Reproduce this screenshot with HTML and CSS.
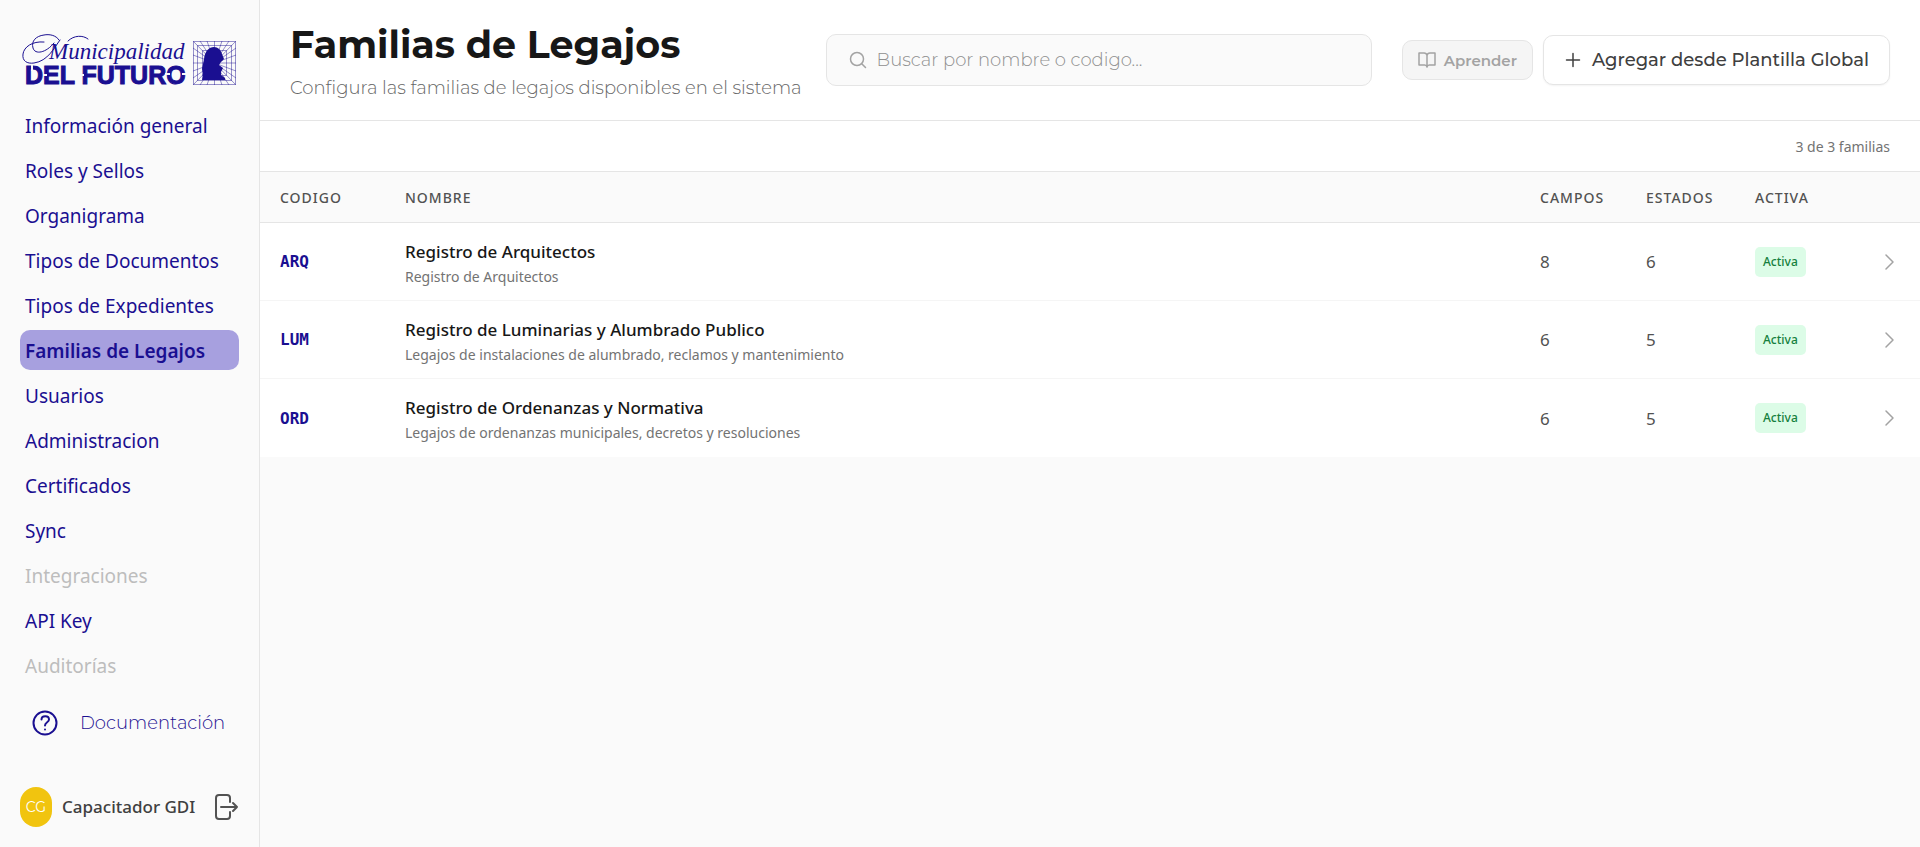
FILE: index.html
```html
<!DOCTYPE html>
<html lang="es">
<head>
  <meta charset="UTF-8">
  <meta name="viewport" content="width=device-width, initial-scale=1.0">
  <title>Familias de Legajos</title>
  <link rel="stylesheet" href="styles.css">
</head>
<body>
  <div class="layout">

    <aside class="sidebar">
      <a class="logo" href="#" aria-label="Municipalidad del Futuro">
        <svg width="214" height="56" viewBox="0 0 214 56">
          <g fill="none" stroke="#1a0f91" stroke-width="1" stroke-linecap="round">
            <path d="M37 8C34 3 27 2 22 3C14 4 9 9 11 16C13 23 24 21 32 11"/>
            <path d="M22 10C10 9 2 15 1 22C0 29 5 32 12 31C26 29 32 16 38 8"/>
            <path d="M46 9C52 3 61 3 66 7"/>
          </g>
          <text class="logo-script" x="27" y="27">Municipalidad</text>
          <text class="logo-block" x="3" y="52">DEL FUTURO</text>
          <!-- stencil cuts -->
          <path fill="#fafafa" d="M9 33h2v6h-2zM21 42h4v2h-4zM58 42h4v2h-4zM143 41h5v2h-5zM160 41h5v2h-5z"/>
          <g fill="none" stroke="#1a0f91" stroke-width="1" stroke-opacity="0.45">
            <path d="M171.500 9.500h42v43h-42zM175.500 13.500h34v35h-34zM180.500 18.500h24v25h-24z"/>
            <path d="M171 9l43 44M214 9l-43 44M178 9l29 44M207 9l-29 44M185 9l15 44M200 9l-15 44M171 16l43 30M214 16l-43 30M171 23l43 16M214 23l-43 16M192.500 9v44M171 31h43"/>
          </g>
          <path fill="#1a0f91" d="M180 48L181 41L180 37L182 27C183 19 187 15 192 15C196 15 199 18 200 22L202 27L199 30L197 33L201 36L199 40L199 43L203 46V48Z"/>
        </svg>
      </a>

      <nav class="menu">
        <a class="menu-item" href="#">Información general</a>
        <a class="menu-item" href="#">Roles y Sellos</a>
        <a class="menu-item" href="#">Organigrama</a>
        <a class="menu-item" href="#">Tipos de Documentos</a>
        <a class="menu-item" href="#">Tipos de Expedientes</a>
        <a class="menu-item active" href="#" aria-current="page">Familias de Legajos</a>
        <a class="menu-item" href="#">Usuarios</a>
        <a class="menu-item" href="#">Administracion</a>
        <a class="menu-item" href="#">Certificados</a>
        <a class="menu-item" href="#">Sync</a>
        <a class="menu-item disabled" href="#" aria-disabled="true">Integraciones</a>
        <a class="menu-item" href="#">API Key</a>
        <a class="menu-item disabled" href="#" aria-disabled="true">Auditorías</a>
      </nav>

      <a class="docs" href="#">
        <svg width="26" height="26" viewBox="0 0 26 26" fill="none" stroke="currentColor" stroke-width="2" stroke-linecap="round" stroke-linejoin="round">
          <circle cx="13" cy="13" r="11.500"/>
          <path d="M9.500 9.500C9.500 5 17 5 17 9.500C17 12.500 13 12 13 15.500"/>
          <path d="M13 19.500v.1"/>
        </svg>
        <span>Documentación</span>
      </a>

      <div class="user">
        <span class="avatar">CG</span>
        <span class="user-name">Capacitador GDI</span>
        <button class="logout" type="button" aria-label="Salir">
          <svg width="26" height="26" viewBox="0 0 26 26" fill="none" stroke="currentColor" stroke-width="2" stroke-linecap="round" stroke-linejoin="round">
            <path d="M17 8V4a3 3 0 0 0-3-3H6a3 3 0 0 0-3 3v18a3 3 0 0 0 3 3h8a3 3 0 0 0 3-3v-4"/>
            <path d="M8 13h16M20 9l4 4-4 4"/>
          </svg>
        </button>
      </div>
    </aside>

    <main class="content">
      <header class="header">
        <div class="heading">
          <h1>Familias de Legajos</h1>
          <p>Configura las familias de legajos disponibles en el sistema</p>
        </div>
        <label class="search">
          <svg width="18" height="18" viewBox="0 0 18 18" fill="none" stroke="currentColor" stroke-width="1.500" stroke-linecap="round">
            <circle cx="8" cy="8" r="6.500"/>
            <path d="M13 13l3.500 3.500"/>
          </svg>
          <input type="text" placeholder="Buscar por nombre o codigo..." aria-label="Buscar por nombre o codigo">
        </label>
        <div class="actions">
          <button class="btn btn-learn" type="button" disabled>
            <svg width="18" height="18" viewBox="0 0 18 18" fill="none" stroke="currentColor" stroke-width="1.500" stroke-linecap="round" stroke-linejoin="round">
              <path d="M9 4.500a3 3 0 0 0-3-2.500H1v12h5.500a2.500 2.500 0 0 1 2.500 2a2.500 2.500 0 0 1 2.500-2H17V2h-5a3 3 0 0 0-3 2.500v11"/>
            </svg>
            Aprender
          </button>
          <button class="btn btn-add" type="button">
            <svg width="18" height="18" viewBox="0 0 18 18" fill="none" stroke="currentColor" stroke-width="1.500" stroke-linecap="round">
              <path d="M9 2.500v13M2.500 9h13"/>
            </svg>
            Agregar desde Plantilla Global
          </button>
        </div>
      </header>

      <div class="count">3 de 3 familias</div>

      <table class="families">
        <thead>
          <tr>
            <th class="col-code">Codigo</th>
            <th>Nombre</th>
            <th class="col-fields">Campos</th>
            <th class="col-states">Estados</th>
            <th class="col-active">Activa</th>
            <th class="col-open"></th>
          </tr>
        </thead>
        <tbody>
          <tr>
            <td class="code">ARQ</td>
            <td>
              <div class="name">Registro de Arquitectos</div>
              <div class="description">Registro de Arquitectos</div>
            </td>
            <td>8</td>
            <td>6</td>
            <td><span class="badge">Activa</span></td>
            <td class="open"><svg width="20" height="20" viewBox="0 0 20 20"><path d="M6 3l7 7-7 7"/></svg></td>
          </tr>
          <tr>
            <td class="code">LUM</td>
            <td>
              <div class="name">Registro de Luminarias y Alumbrado Publico</div>
              <div class="description">Legajos de instalaciones de alumbrado, reclamos y mantenimiento</div>
            </td>
            <td>6</td>
            <td>5</td>
            <td><span class="badge">Activa</span></td>
            <td class="open"><svg width="20" height="20" viewBox="0 0 20 20"><path d="M6 3l7 7-7 7"/></svg></td>
          </tr>
          <tr>
            <td class="code">ORD</td>
            <td>
              <div class="name">Registro de Ordenanzas y Normativa</div>
              <div class="description">Legajos de ordenanzas municipales, decretos y resoluciones</div>
            </td>
            <td>6</td>
            <td>5</td>
            <td><span class="badge">Activa</span></td>
            <td class="open"><svg width="20" height="20" viewBox="0 0 20 20"><path d="M6 3l7 7-7 7"/></svg></td>
          </tr>
        </tbody>
      </table>
    </main>

  </div>
</body>
</html>
```
FILE: styles.css
```css
* {
  box-sizing: border-box;
}
body, html {
  margin: 0;
  padding: 0;
}
body {
  font-family: "Segoe UI", "Noto Sans", sans-serif;
  font-size: 16px;
  background-color: #fafafa;
  color: #525252;
}
a {
  color: #1a0f91;
  text-decoration: none;
}
button {
  cursor: pointer;
}
.layout {
  display: flex;
  min-height: 100vh;
}

/* sidebar */
.sidebar {
  display: flex;
  flex-direction: column;
  flex: none;
  width: 260px;
  padding: 32px 20px 20px;
  border-right: 1px solid #e5e5e5;
}
.logo {
  height: 73px;
  padding-left: 2px;
}
.logo svg {
  display: block;
}
.logo-script {
  fill: #1a0f91;
  font-family: "Liberation Serif", serif;
  font-style: italic;
  font-size: 23px;
}
.logo-block {
  fill: #1a0f91;
  stroke: #1a0f91;
  stroke-width: 1px;
  font-family: "Liberation Sans", sans-serif;
  font-weight: bold;
  font-size: 25px;
}
.menu {
  display: flex;
  flex-direction: column;
  gap: 5px;
}
.menu-item {
  height: 40px;
  padding: 0 5px;
  border-radius: 10px;
  font-size: 19px;
  line-height: 42px;
  white-space: nowrap;
}
.menu-item.active {
  background-color: #a7a0df;
  font-weight: 600;
}
.menu-item.disabled {
  color: #bdbdbd;
}
.docs {
  display: flex;
  align-items: center;
  gap: 22px;
  margin-top: 25px;
  padding-left: 12px;
  font-family: "Montserrat", "Inter", sans-serif;
  font-size: 18px;
  font-weight: 300;
}
.user {
  display: flex;
  align-items: center;
  gap: 10px;
  margin-top: auto;
}
.avatar {
  width: 32px;
  height: 40px;
  border-radius: 16px;
  background-color: #f1c40f;
  color: #fff;
  font-family: "Montserrat", "Inter", sans-serif;
  font-size: 14px;
  line-height: 40px;
  text-align: center;
}
.user-name {
  color: #404040;
  font-size: 17px;
  font-weight: 500;
  line-height: 40px;
  white-space: nowrap;
}
.logout {
  display: flex;
  margin-left: auto;
  padding: 0;
  border: none;
  background: none;
  color: #525252;
}

/* header */
.content {
  flex: 1;
  min-width: 0;
}
.header {
  display: flex;
  align-items: center;
  gap: 24px;
  height: 121px;
  padding: 0 30px;
  border-bottom: 1px solid #e5e5e5;
  background-color: #fff;
  font-family: "Montserrat", "Inter", sans-serif;
}
.heading h1 {
  margin: 0;
  color: #171717;
  font-size: 38px;
  line-height: 50px;
}
.heading p {
  margin: 6px 0 0;
  color: #666;
  font-size: 18px;
  font-weight: 300;
  line-height: 24px;
  white-space: nowrap;
}
.search {
  display: flex;
  align-items: center;
  gap: 10px;
  flex: 1;
  height: 52px;
  padding: 0 22px;
  border: 1px solid #e5e5e5;
  border-radius: 10px;
  background-color: #fafafa;
  color: #a3a3a3;
}
.search input {
  flex: 1;
  min-width: 0;
  padding: 0;
  border: none;
  outline: none;
  background: none;
  color: #171717;
  font-family: inherit;
  font-size: 18px;
  font-weight: 300;
}
.search input::placeholder {
  color: #8f8f8f;
}
.actions {
  display: flex;
  align-items: center;
  gap: 10px;
  margin-left: 6px;
}
.btn {
  display: flex;
  align-items: center;
  border: 1px solid #e5e5e5;
  border-radius: 10px;
  font-family: inherit;
  font-weight: 600;
  white-space: nowrap;
}
.btn-learn {
  gap: 8px;
  height: 40px;
  padding: 0 15px;
  background-color: #f5f5f5;
  color: #a3a3a3;
  font-size: 15px;
}
.btn-add {
  gap: 10px;
  height: 50px;
  padding: 0 20px;
  background-color: #fff;
  box-shadow: 0 1px 2px rgba(0, 0, 0, 0.05);
  color: #404040;
  font-size: 18px;
  font-weight: 500;
}

/* table */
.count {
  height: 50px;
  padding: 0 30px;
  background-color: #fff;
  color: #737373;
  font-size: 14px;
  line-height: 52px;
  text-align: right;
}
.families {
  width: 100%;
  border-collapse: separate;
  border-spacing: 0;
  table-layout: fixed;
  background-color: #fff;
}
.families th {
  height: 52px;
  padding: 0 20px;
  border-top: 1px solid #e5e5e5;
  border-bottom: 1px solid #e5e5e5;
  background-color: #fafafa;
  font-size: 14px;
  font-weight: 500;
  letter-spacing: 1px;
  text-align: left;
  text-transform: uppercase;
}
.families td {
  height: 78px;
  padding: 0 20px;
  border-bottom: 1px solid #f5f5f5;
  font-size: 17px;
}
.families tr:last-child td {
  border-bottom: none;
}
.col-code {
  width: 125px;
}
.col-fields {
  width: 106px;
}
.col-states {
  width: 109px;
}
.col-active {
  width: 125px;
}
.col-open {
  width: 60px;
}
.families .code {
  color: #1a0f91;
  font-family: "DejaVu Sans Mono", monospace;
  font-size: 16px;
  font-weight: bold;
}
.name {
  padding-top: 4px;
  color: #171717;
  font-size: 17px;
  font-weight: 500;
  line-height: 26px;
}
.description {
  color: #737373;
  font-size: 14px;
  line-height: 24px;
}
.badge {
  display: inline-block;
  padding: 0 8px;
  border-radius: 5px;
  background-color: #dcfce7;
  color: #15803d;
  font-size: 12px;
  font-weight: 500;
  line-height: 30px;
}
.open svg {
  display: block;
  fill: none;
  stroke: #a3a3a3;
  stroke-width: 1.5;
  stroke-linecap: round;
  stroke-linejoin: round;
}
```
